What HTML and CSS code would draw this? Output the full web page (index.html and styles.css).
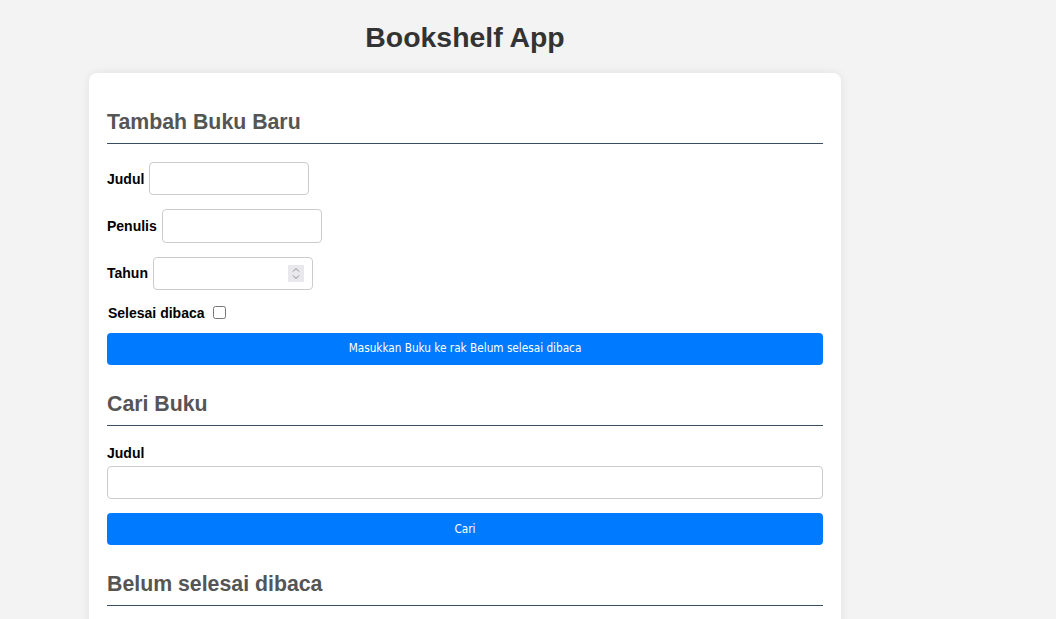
FILE: index.html
```html
<!DOCTYPE html>
<html lang="id">
<head>
<meta charset="utf-8">
<title>Bookshelf App</title>
<link rel="stylesheet" href="styles.css">
</head>
<body>
<div class="page">
  <h1 class="title">Bookshelf App</h1>
  <main class="card">
    <section class="section">
      <h2 class="section-title">Tambah Buku Baru</h2>
      <form class="form">
        <div class="row">
          <label class="label" for="bookTitle">Judul</label>
          <input class="input input-small" id="bookTitle" type="text">
        </div>
        <div class="row">
          <label class="label" for="bookAuthor">Penulis</label>
          <input class="input input-small" id="bookAuthor" type="text">
        </div>
        <div class="row">
          <label class="label" for="bookYear">Tahun</label>
          <span class="number-wrap">
            <input class="input input-small input-number" id="bookYear" type="number">
            <span class="spinner" aria-hidden="true">
              <svg width="16" height="17" viewBox="0 0 16 17">
                <path d="M5 6.5 L8 3.5 L11 6.5" fill="none" stroke="#8a8a8e" stroke-width="1"/>
                <path d="M5 10.5 L8 13.5 L11 10.5" fill="none" stroke="#8a8a8e" stroke-width="1"/>
              </svg>
            </span>
          </span>
        </div>
        <div class="row row-check">
          <label class="label label-check" for="bookDone">Selesai dibaca</label>
          <input class="checkbox" id="bookDone" type="checkbox">
        </div>
        <button class="btn" type="button">Masukkan Buku ke rak Belum selesai dibaca</button>
      </form>
    </section>
    <section class="section">
      <h2 class="section-title">Cari Buku</h2>
      <form class="form">
        <label class="label label-block" for="searchTitle">Judul</label>
        <input class="input input-full" id="searchTitle" type="text">
        <button class="btn" type="button">Cari</button>
      </form>
    </section>
    <section class="section">
      <h2 class="section-title">Belum selesai dibaca</h2>
      <div class="list"></div>
    </section>
  </main>
</div>
</body>
</html>
```
FILE: styles.css
```css
* { box-sizing: border-box; }
html, body { margin: 0; padding: 0; }
body {
  background: #f3f3f3;
  font-family: "Liberation Sans", Arial, sans-serif;
  color: #000;
  overflow: hidden;
}
.page {
  width: 752px;
  margin-left: 89px;
}
.title {
  margin: 21px 0 20px;
  font-size: 28.4px;
  line-height: 32px;
  font-weight: bold;
  color: #333;
  text-align: center;
}
.card {
  background: #fff;
  border-radius: 8px;
  box-shadow: 0 0 10px rgba(0, 0, 0, 0.08);
  padding: 0 18px 18px;
  min-height: 700px;
}
.section {
  padding-top: 37px;
}
.section + .section {
  padding-top: 27px;
}
.section-title {
  margin: 0 0 18px;
  font-size: 21.3px;
  line-height: 24px;
  font-weight: bold;
  color: #555;
  padding-bottom: 9px;
  border-bottom: 1px solid #3a4d61;
}
.form { margin: 0; }
.row {
  display: flex;
  align-items: center;
  gap: 5px;
  margin-bottom: 14px;
}
.row-check {
  gap: 4px;
  margin-bottom: 12px;
  padding-top: 1px;
  padding-left: 1px;
}
.label {
  font-size: 14px;
  line-height: 16px;
  font-weight: bold;
}
.label-block {
  display: block;
  margin: 19px 0 5px;
}
.input {
  height: 33.33px;
  padding: 8px;
  border: 1px solid #ccc;
  border-radius: 4px;
  font-family: "Liberation Sans", Arial, sans-serif;
  font-size: 13.33px;
  background: #fff;
}
.input-small { width: 160px; }
.number-wrap {
  position: relative;
  display: flex;
}
.input-number {
  -moz-appearance: textfield;
}
.input-number::-webkit-inner-spin-button,
.input-number::-webkit-outer-spin-button {
  -webkit-appearance: none;
  margin: 0;
}
.spinner {
  position: absolute;
  top: 8px;
  right: 9px;
  width: 16px;
  height: 17px;
  background: #e9e9ed;
  display: flex;
  pointer-events: none;
}
.input-full {
  display: block;
  width: 100%;
  margin-bottom: 14px;
}
.checkbox {
  width: 13px;
  height: 13px;
  margin: 0 0 0 4px;
}
.btn {
  display: block;
  width: 100%;
  height: 32px;
  padding: 0;
  border: none;
  border-radius: 4px;
  background: #007bff;
  color: #fff;
  font-family: "DejaVu Sans Condensed", "DejaVu Sans", sans-serif;
  font-size: 11.7px;
  line-height: 31px;
  cursor: pointer;
}
```
